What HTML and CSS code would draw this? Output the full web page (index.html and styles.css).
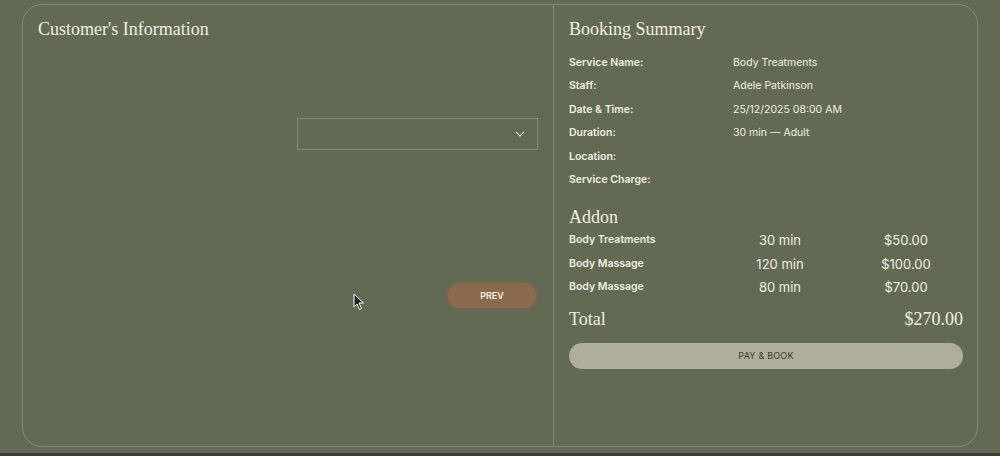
FILE: index.html
```html
<!DOCTYPE html>
<html lang="en">
<head>
  <meta charset="UTF-8" />
  <meta name="viewport" content="width=device-width, initial-scale=1.0"/>
  <title>Booking | Spa</title>
  <link rel="stylesheet" href="styles.css">
</head>
<body>
  <main class="booking">
    <section class="panel customer">
      <h2>Customer's Information</h2>

      <div class="form-grid">
        <div></div>
        <div class="select">
          <svg width="10" height="6" viewBox="0 0 10 6"><path d="M1 1l4 4 4-4" fill="none" stroke="#e8e6d6" stroke-width="1.2"/></svg>
        </div>
      </div>

      <div class="actions">
        <button class="prev">PREV</button>
      </div>

      <svg class="cursor" width="12" height="18" viewBox="0 0 12 18"><path d="M1 1v13l3-3 2.5 5.5 2-1L6 10h4.5z" fill="#222" stroke="#fff" stroke-width="1"/></svg>
    </section>

    <section class="panel summary">
      <h2>Booking Summary</h2>

      <dl class="details">
        <dt>Service Name:</dt><dd>Body Treatments</dd>
        <dt>Staff:</dt><dd>Adele Patkinson</dd>
        <dt>Date &amp; Time:</dt><dd>25/12/2025 08:00 AM</dd>
        <dt>Duration:</dt><dd>30 min — Adult</dd>
        <dt>Location:</dt><dd></dd>
        <dt>Service Charge:</dt><dd></dd>
      </dl>

      <h3>Addon</h3>
      <div class="addons">
        <span class="name">Body Treatments</span><span>30 min</span><span class="price">$50.00</span>
        <span class="name">Body Massage</span><span>120 min</span><span class="price">$100.00</span>
        <span class="name">Body Massage</span><span>80 min</span><span class="price">$70.00</span>
      </div>

      <div class="total">
        <span>Total</span>
        <span>$270.00</span>
      </div>

      <button class="pay">PAY &amp; BOOK</button>
    </section>
  </main>
  <div class="strip"></div>
</body>
</html>
```

FILE: styles.css
```css
:root {
  --bg: #636a53;
  --line: #838970;
  --text: #f1eee2;
  --serif: 'Liberation Serif', 'Times New Roman', serif;
  --sans: Inter, 'Liberation Sans', sans-serif;
  --brown: #8a6a4c;
  --pay: #aeae9a;
}
* {
  margin: 0;
  padding: 0;
  box-sizing: border-box;
}
body {
  background: var(--bg);
  color: var(--text);
  font-family: var(--sans);
  height: 456px;
  overflow: hidden;
  display: flex;
  flex-direction: column;
}
.booking {
  margin: 4px 22px 0 22px;
  height: 443px;
  border: 1px solid var(--line);
  border-radius: 20px;
  display: grid;
  grid-template-columns: 531px minmax(0, 1fr);
}
.strip {
  margin-top: auto;
  height: 3px;
  background: #3b3e33;
}
.panel {
  padding: 14px 14px 0 15px;
}
.customer {
  position: relative;
  border-right: 1px solid var(--line);
}
h2 {
  font-family: var(--serif);
  font-weight: normal;
  font-size: 18px;
  line-height: 20px;
}
h3 {
  font-family: var(--serif);
  font-weight: normal;
  font-size: 18px;
  line-height: 20px;
  margin-top: 20px;
}
.form-grid {
  display: grid;
  grid-template-columns: 241px 241px;
  gap: 18px;
  margin-top: 79px;
}
.select {
  height: 32px;
  border: 1px solid var(--line);
  display: flex;
  align-items: center;
  justify-content: flex-end;
  padding-right: 12px;
}
.actions {
  display: flex;
  justify-content: flex-end;
  margin-top: 133px;
  padding-right: 3px;
}
.prev {
  width: 88px;
  height: 25px;
  border: none;
  border-radius: 12px;
  background: var(--brown);
  color: #f4efe8;
  font-family: var(--sans);
  font-size: 9px;
  font-weight: 600;
  box-shadow: 0 0 4px var(--brown);
}
.cursor {
  position: absolute;
  left: 330px;
  top: 288px;
}
.details {
  display: grid;
  grid-template-columns: 164px 1fr;
  row-gap: 9px;
  margin-top: 17px;
  font-size: 10.5px;
  line-height: 14.4px;
}
.details dt {
  font-weight: 600;
}
.details dd {
  min-height: 14px;
}
.addons {
  display: grid;
  grid-template-columns: 148px 126px 1fr;
  row-gap: 9px;
  margin-top: 6px;
  font-size: 13px;
  line-height: 14.5px;
  text-align: center;
}
.addons .name {
  text-align: left;
  font-size: 10.5px;
  font-weight: 600;
}
.addons .price {
  padding-left: 6px;
}
.total {
  display: flex;
  justify-content: space-between;
  font-family: var(--serif);
  font-size: 18px;
  line-height: 20px;
  margin-top: 14px;
}
.pay {
  display: block;
  width: 100%;
  height: 26px;
  margin-top: 14px;
  border: none;
  border-radius: 13px;
  background: var(--pay);
  color: #3b3d31;
  font-family: var(--sans);
  font-size: 9px;
  letter-spacing: 0.2px;
}
```
